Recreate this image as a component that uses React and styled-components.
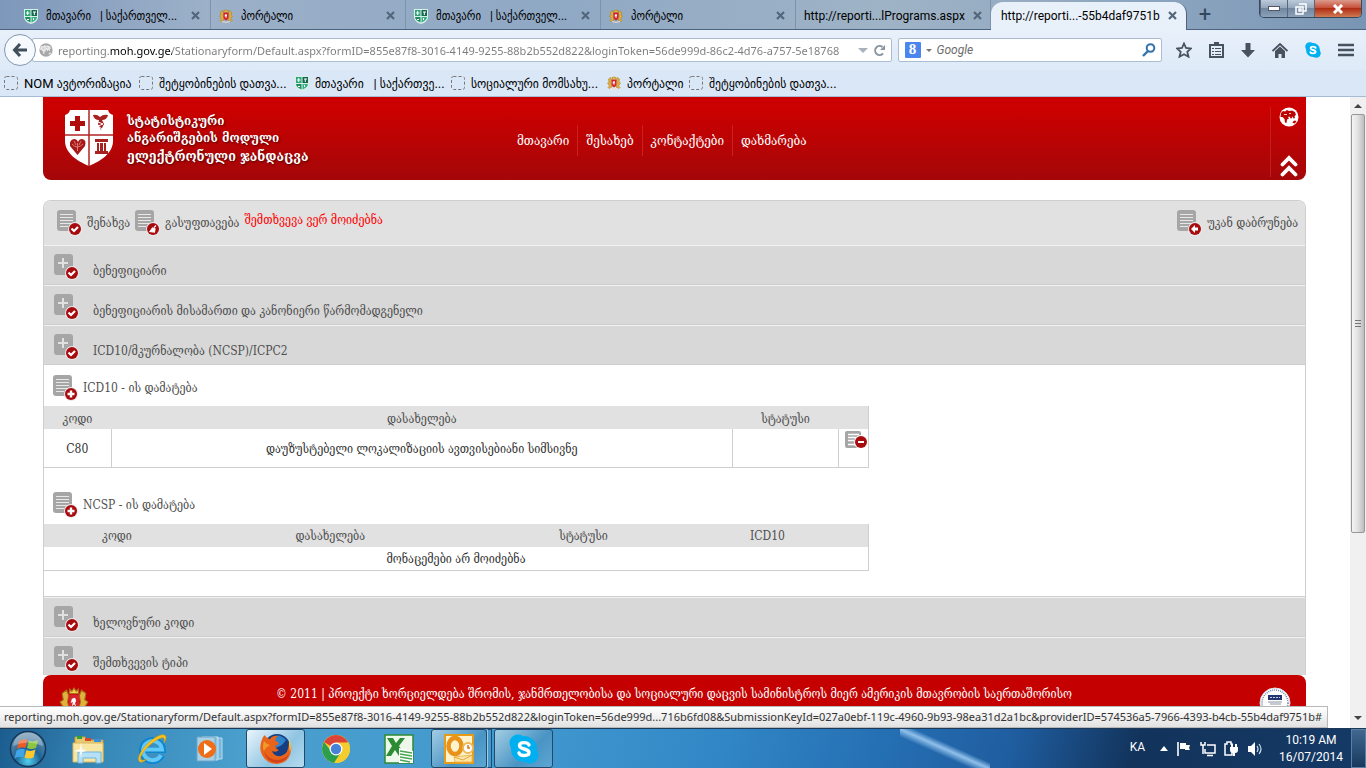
import React from 'react'
import styled, { createGlobalStyle } from 'styled-components'

const uiFont = 'Roboto, "DejaVu Sans Condensed", "DejaVu Sans", sans-serif'
const urlFont = '"Noto Sans", "Open Sans", sans-serif'
const pageFont = '"DejaVu Serif Condensed", "DejaVu Serif", serif'

const URL_TEXT = 'reporting.moh.gov.ge/Stationaryform/Default.aspx?formID=855e87f8-3016-4149-9255-88b2b552d822&loginToken=56de999d-86c2-4d76-a757-5e18768'
const STATUS_TEXT = 'reporting.moh.gov.ge/Stationaryform/Default.aspx?formID=855e87f8-3016-4149-9255-88b2b552d822&loginToken=56de999d...716b6fd08&SubmissionKeyId=027a0ebf-119c-4960-9b93-98ea31d2a1bc&providerID=574536a5-7966-4393-b4cb-55b4daf9751b#'

const tabs = [
  { icon: 'shield', title: 'მთავარი   | საქართველ...' },
  { icon: 'crest', title: 'პორტალი' },
  { icon: 'shield', title: 'მთავარი   | საქართველ...' },
  { icon: 'crest', title: 'პორტალი' },
  { title: 'http://reporti...lPrograms.aspx' },
  { title: 'http://reporti...-55b4daf9751b', active: true },
]

const bookmarks = [
  { icon: 'blank', title: 'NOM ავტორიზაცია', width: 135 },
  { icon: 'blank', title: 'შეტყობინების დათვა...', width: 156 },
  { icon: 'shield', title: 'მთავარი   | საქართვე...', width: 156 },
  { icon: 'blank', title: 'სოციალური მომსახუ...', width: 156 },
  { icon: 'crest', title: 'პორტალი', width: 82 },
  { icon: 'blank', title: 'შეტყობინების დათვა...', width: 160 },
]

/* ---------- icons ---------- */

const GreenShield = () => (
  <svg width="14" height="16" viewBox="0 0 14 16">
    <path d="M0 1h14v8c0 3-3 6-7 7-4-1-7-4-7-7z" fill="#d9f0e6" />
    <path d="M1 2h5.500v6H1z" fill="#2fa67a" />
    <path d="M7.500 2H13v6H7.500z" fill="#15664e" />
    <path d="M1 9h5.500v5.500C3 13 1 11 1 9z" fill="#1f8c64" />
    <path d="M7.500 9H13c0 2-2 4-5.500 5.500z" fill="#37b083" />
    <path d="M3.700 3v4M2 5h3.500M9 4h3M10.300 4v3M3 11l1 1 1-1M9.500 10v2" stroke="#fff" strokeWidth="1" />
  </svg>
)

const Crest = ({ size = 14 }) => (
  <svg width={size} height={size} viewBox="0 0 28 28">
    <path d="M3 6l4-3 2 5-1 6 2 8-6 3-2-2 3-3-4-6 3-2zM25 6l-4-3-2 5 1 6-2 8 6 3 2-2-3-3 4-6-3-2z" fill="#e0b13c" stroke="#a87416" strokeWidth="1" />
    <path d="M9 7h10v9c0 4-3 6-5 7-2-1-5-3-5-7z" fill="#d5222b" />
    <path d="M10 6V2l2 2 2-3 2 3 2-2v4z" fill="#f3cf52" stroke="#a87416" strokeWidth="1" />
    <path d="M12 18l1-4-2 1 1-4 3-1 1 3-1 2 1 4-2-3z" fill="#fff" />
    <path d="M6 24q8 3 16 0v2q-8 3-16 0z" fill="#f0ded0" />
  </svg>
)

const BlankFavicon = () => (
  <svg width="14" height="14" viewBox="0 0 14 14">
    <rect x="0.500" y="0.500" width="13" height="13" rx="2" fill="none" stroke="#777" strokeDasharray="3 2" />
  </svg>
)

const Favicon = ({ kind }) => {
  if (kind === 'shield') return <GreenShield />
  if (kind === 'crest') return <Crest />
  return <BlankFavicon />
}

const Close = () => (
  <svg width="9" height="9" viewBox="0 0 9 9">
    <path d="M1 1l7 7M8 1l-7 7" stroke="#53667c" strokeWidth="2.200" />
  </svg>
)

const MinistryShield = () => (
  <svg width="50" height="56" viewBox="0 0 50 56">
    <path d="M6 0h38q1 4 5 5v26c0 12-12 20-24 25C13 51 1 43 1 31V5q4-1 5-5z" fill="#fff" />
    <path d="M25 0v56M1 25h48" stroke="#b32525" strokeWidth="1.500" />
    <path d="M11 6h5v5h5v5h-5v5h-5v-5H6v-5h5z" fill="#b00d0d" />
    <path d="M29 5q4-1 7 2 3-3 8-2-1 5-6 5l2 4-3 6-3-6 1-4q-5 0-6-5z" fill="#a82020" />
    <path d="M34 12l5 2-5 2 4 3" stroke="#fff" fill="none" />
    <path d="M13.500 45L6 36q-1-6 4-7 3 0 4 3 1-3 4-3 5 1 3 7z" fill="#a81818" />
    <path d="M8 34q5 6 11 0M13.500 33v8M10 31l2 4M17 31l-2 4" stroke="#d77" fill="none" />
    <path d="M31 29h13v3H31zM33 33h9v8h-9zM31 41h13v3H31z" fill="#a82020" />
    <path d="M35.500 33v8M39.500 33v8" stroke="#fff" />
  </svg>
)

const badgeMarks = {
  check: <path d="M14.500 18.500l2.500 2.500 4-4" fill="none" stroke="#fff" strokeWidth="2.200" />,
  plus: <path d="M18 15.500v7M14.500 19h7" stroke="#fff" strokeWidth="2.400" />,
  back: <path d="M14 19l4-4v2.500h3v3h-3V23z" fill="#fff" />,
  brush: <path d="M21 15.500l-2 2M15 21.500l2.500-3.500 2.500 1-.500 3z" fill="#fff" stroke="#fff" strokeWidth="1.200" />,
}

/* grey sheet or grey plus tile with a round red badge */
const FormIcon = ({ tile, mark }) => (
  <svg width="25" height="26" viewBox="0 0 25 26">
    <rect x="0" y="0" width="19" height="21" rx="3" fill="#a6a6a6" />
    {tile
      ? <path d="M9 4v10M4 9h10" stroke="#e1e1e1" strokeWidth="2" />
      : <path d="M3 4.500h13M3 7.500h13M3 10.500h13M3 13.500h11M3 16.500h8" stroke="#e8e8e8" strokeWidth="1.200" />}
    <circle cx="18" cy="19" r="7" fill="#e9e9e9" />
    <circle cx="18" cy="19" r="6" fill="#a80b0e" />
    {badgeMarks[mark]}
  </svg>
)

const RemoveIcon = () => (
  <svg width="23" height="18" viewBox="0 0 23 18">
    <rect x="0" y="0" width="16" height="17" rx="2" fill="#a6a6a6" />
    <path d="M3 3.500h11M3 6.500h8M3 9.500h6M3 13.500h7" stroke="#fff" strokeWidth="1.500" />
    <circle cx="16" cy="11" r="7" fill="#fff" />
    <circle cx="16" cy="11" r="6" fill="#a80b0e" />
    <path d="M13 11h6" stroke="#fff" strokeWidth="2" />
  </svg>
)

const Globe = ({ fill = '#fff', land = '#bd0404', size = 20 }) => (
  <svg width={size} height={size} viewBox="0 0 20 20">
    <circle cx="10" cy="10" r="9.500" fill={fill} />
    <path d="M2 6l2-2 2 .500L8 3l2 1 3-.500 3 1.500 1 3-1.500 1 .500 2-1.500.500L13.500 9.500 12 12l-1.500-2.500L9 10l1 1.500-2 1L7.500 16 6 15.500 5.500 12 3.500 10 1.500 10z" fill={land} />
    <path d="M5 7.500h3M10 6.500h2" stroke={fill} strokeWidth="0.800" />
    <path d="M13.500 15l2-1.500 2 .500-1.500 2.500-2-.500z" fill={land} />
  </svg>
)

const DoubleUp = () => (
  <svg width="18" height="22" viewBox="0 0 18 22">
    <path d="M2.500 9.500L9 3l6.500 6.500M2.500 19.500L9 13l6.500 6.500" fill="none" stroke="#fff" strokeWidth="3.800" strokeLinecap="round" />
  </svg>
)

const BackArrow = () => (
  <svg width="16" height="16" viewBox="0 0 16 16">
    <path d="M8 2L2.500 8 8 14M3 8h12" fill="none" stroke="#414f5d" strokeWidth="3" />
  </svg>
)

const Reload = () => (
  <svg width="13" height="13" viewBox="0 0 13 13">
    <path d="M10 9.500A4.500 4.500 0 1 1 9.500 3" fill="none" stroke="#8b95a0" strokeWidth="2" />
    <path d="M12 1v5H7z" fill="#8b95a0" />
  </svg>
)

const Magnifier = () => (
  <svg width="14" height="14" viewBox="0 0 14 14">
    <circle cx="8.500" cy="5" r="3.800" fill="none" stroke="#3373ad" strokeWidth="2" />
    <path d="M6 8l-5 5" stroke="#3373ad" strokeWidth="2.400" />
  </svg>
)

const Star = () => (
  <svg width="16" height="16" viewBox="0 0 16 16">
    <path d="M8 1.500l2 4.500 5 .500-3.700 3.300 1.200 4.900L8 12.200l-4.500 2.500 1.200-4.900L1 6.500 6 6z" fill="none" stroke="#46525f" strokeWidth="1.800" />
  </svg>
)

const Clipboard = () => (
  <svg width="15" height="16" viewBox="0 0 15 16">
    <path d="M1 3h13v12H1z" fill="none" stroke="#46525f" strokeWidth="2" />
    <path d="M5 0h5v4H5zM3 6h2v1H3zM6 6h6v1H6zM3 9h2v1H3zM6 9h6v1H6zM3 12h2v1H3zM6 12h6v1H6z" fill="#46525f" />
  </svg>
)

const Download = () => (
  <svg width="14" height="15" viewBox="0 0 14 15">
    <path d="M4.500 0h5v7H14l-7 7.500L0 7h4.500z" fill="#46525f" />
  </svg>
)

const Home = () => (
  <svg width="16" height="15" viewBox="0 0 16 15">
    <path d="M.500 8L8 1l7.500 7" fill="none" stroke="#46525f" strokeWidth="1.800" />
    <path d="M3 8l5-4.500L13 8v7H9.500v-4h-3v4H3z" fill="#46525f" />
  </svg>
)

const SkypeLogo = ({ size }) => (
  <svg width={size} height={size} viewBox="0 0 30 30">
    <circle cx="9" cy="9" r="8.500" fill="#00aff0" />
    <circle cx="21" cy="21" r="8.500" fill="#00aff0" />
    <circle cx="15" cy="15" r="13" fill="#00aff0" />
    <path d="M20 11c-1-3-9.500-3.500-9.500.500 0 4.500 9.500 2.500 9.500 7 0 4-9 3.800-10 .500" fill="none" stroke="#fff" strokeWidth="3.400" strokeLinecap="round" />
  </svg>
)

const MenuBars = () => (
  <svg width="16" height="14" viewBox="0 0 16 14">
    <path d="M0 2h16M0 7h16M0 12h16" stroke="#46525f" strokeWidth="2.600" />
  </svg>
)

const WindowsOrb = () => (
  <svg width="38" height="38" viewBox="0 0 38 38">
    <defs>
      <radialGradient id="orb" cx="50%" cy="85%" r="80%">
        <stop offset="0" stopColor="#4fd0ee" />
        <stop offset="0.450" stopColor="#1d6498" />
        <stop offset="1" stopColor="#6d93ad" />
      </radialGradient>
    </defs>
    <circle cx="19" cy="19" r="17.500" fill="url(#orb)" stroke="#16395a" strokeWidth="1.500" />
    <path d="M10 11q4-3 8.500-1l-2 8q-4-2-8.500 1z" fill="#ee5a24" />
    <path d="M20 10.500q4 2 9-.500l-2 8q-5 2-9 0z" fill="#8cc63f" />
    <path d="M7.500 20.500q4-3 8.500-1l-2 8q-4-2-8.500 1z" fill="#3fa5e8" />
    <path d="M17.500 20q4 2 9-.500l-2 8q-5 2-9 0z" fill="#fdc82f" />
    <path d="M4 16Q6 3 19 2.500 32 3 34 16 19 9 4 16z" fill="#fff" opacity="0.300" />
  </svg>
)

const FolderLogo = () => (
  <svg width="34" height="30" viewBox="0 0 34 30">
    <path d="M3 3h10l2 3h16v21H3z" fill="#e8c96e" stroke="#c39b3c" />
    <path d="M5 2h5v3H5z" fill="#2fa33a" />
    <path d="M13 4h6v3h-6z" fill="#d9472b" />
    <path d="M22 5h7v3h-7z" fill="#3d8edc" />
    <path d="M1 9h30v19H1z" fill="#f8e6a4" stroke="#d9b85c" />
    <path d="M6 29V18h23v11h-5v-5H11v5z" fill="#b6e0f6" stroke="#6fb4de" />
    <path d="M9 8l1 7 5 2-5 1-1 6-1-6-6-1 6-2z" fill="#fff" opacity="0.900" />
  </svg>
)

const ExplorerLogo = () => (
  <svg width="32" height="32" viewBox="0 0 32 32">
    <path d="M26 22A10.500 10.500 0 1 1 27 17H9" fill="none" stroke="#0d86d1" strokeWidth="6" />
    <path d="M25 22A9.500 9.500 0 1 1 26 16.500H9" fill="none" stroke="#62c8f8" strokeWidth="4" />
    <path d="M4 29C-2 25 12 6 25 2c6-1 6 3 3 8 1-5 0-6-3-5C14 9 2 23 5 27q2 1 6-1-4 4-7 3z" fill="#fbc51d" stroke="#d99a00" strokeWidth="0.600" />
  </svg>
)

const MediaLogo = () => (
  <svg width="28" height="26" viewBox="0 0 28 26">
    <path d="M10 2h16v21H10z" fill="#78b6dc" stroke="#b5dcf0" />
    <path d="M6 1h16v23H6z" fill="#8fc4e3" stroke="#c2e2f3" />
    <path d="M1 1h18v24H1z" fill="#a9cfe3" stroke="#6aa6cb" />
    <circle cx="11" cy="13" r="9" fill="#ee6d16" />
    <path d="M8 7l8 6-8 6z" fill="#fff" />
  </svg>
)

const FirefoxLogo = () => (
  <svg width="32" height="32" viewBox="0 0 32 32">
    <circle cx="17" cy="14" r="13" fill="#173e82" />
    <path d="M11 5q8-6 15 2-5 8-13 8z" fill="#2f83cb" />
    <path d="M3 4q-5 10-1 18 5 9 15 9 12-1 14-13 1-6-2-9 0 12-8 14-7 1-9-5 4 2 7-1-3-1-4-4l4-2q-1-3-4-3 0-3 3-5-5-1-8 3-4-1-5-4z" fill="#e8641b" />
    <path d="M4 18q2 11 13 12 9-1 12-9-4 5-11 6Q8 27 4 18z" fill="#d2421a" />
    <path d="M29 6q3 6 1 13-1-5-1-13z" fill="#fcd549" />
    <path d="M4 8q-2 6 0 10 2-4 6-6-4-1-6-4z" fill="#f39a26" />
  </svg>
)

const ChromeLogo = () => (
  <svg width="30" height="30" viewBox="0 0 30 30">
    <circle cx="15" cy="15" r="14" fill="#f5cc2d" />
    <path d="M15 15L2.900 8A14 14 0 0 1 27.100 8z" fill="#dc4437" />
    <path d="M3 8a14 14 0 0 0 10 20.900L20 18l-10-1z" fill="#2c9f4e" />
    <path d="M15 8.500h12.400A14 14 0 0 1 15 29l6-11z" fill="#f5cc2d" />
    <circle cx="15" cy="15" r="6.500" fill="#fff" />
    <circle cx="15" cy="15" r="5.200" fill="#4583d8" />
  </svg>
)

const ExcelLogo = () => (
  <svg width="32" height="30" viewBox="0 0 32 30">
    <path d="M2 1h28v28H2z" fill="#eef8ea" stroke="#2d8a35" strokeWidth="1.500" />
    <path d="M4 4h6l3 5 4-5h5l-6 8 7 10h-7l-4-6-4 6H3l6-10z" fill="#2b8c33" />
    <path d="M16 14l14 3v12H16z" fill="#fff" />
    <path d="M17 17l12 2M17 20l12 2M17 23l12 2M17 26l10 2" stroke="#4aa651" strokeWidth="1.400" />
  </svg>
)

const OutlookLogo = () => (
  <svg width="32" height="30" viewBox="0 0 32 30">
    <path d="M2 1h28v28H2z" fill="#fff3cd" stroke="#e69a15" strokeWidth="2" />
    <ellipse cx="12" cy="12" rx="6.500" ry="8" fill="none" stroke="#e8921a" strokeWidth="4.500" />
    <circle cx="25" cy="14" r="5" fill="#fff" stroke="#eeb755" strokeWidth="2" />
    <path d="M25 11v3h2" fill="none" stroke="#d17711" strokeWidth="1.500" />
    <path d="M11 23l18-2v7H12z" fill="#fde6a6" stroke="#eeb755" />
    <path d="M11 23l9 3 9-5" fill="none" stroke="#e8a53a" />
  </svg>
)

const FlagIcon = () => (
  <svg width="16" height="16" viewBox="0 0 16 16">
    <path d="M2 1v14" stroke="#fff" strokeWidth="1.600" />
    <path d="M4 2h6v2h4l-1 3 1 2H9V8H4z" fill="#fff" />
  </svg>
)

const NetworkIcon = () => (
  <svg width="16" height="16" viewBox="0 0 16 16">
    <path d="M7 4h8v8H5V8M7 14.500h6" fill="none" stroke="#fff" strokeWidth="1.500" />
    <path d="M1 1v3h4V1M3 4v9" fill="none" stroke="#fff" strokeWidth="1.500" />
  </svg>
)

const PowerIcon = () => (
  <svg width="15" height="16" viewBox="0 0 15 16">
    <path d="M1 3h2V1h4v2h1v11H1z" fill="none" stroke="#fff" strokeWidth="1.500" />
    <path d="M6 6h8v3q0 3-3 3v3H9v-3q-3 0-3-3zM7 3h2v3H7zM11 3h2v3h-2z" fill="#fff" />
  </svg>
)

const SoundIcon = () => (
  <svg width="16" height="16" viewBox="0 0 16 16">
    <path d="M1 5h3l4-4v14l-4-4H1z" fill="#fff" />
    <path d="M10 5q2 3 0 6M12 3q4 5 0 10" fill="none" stroke="#cfe0ee" strokeWidth="1.200" />
  </svg>
)

const UsaidSeal = () => (
  <svg width="32" height="32" viewBox="0 0 32 32">
    <circle cx="16" cy="16" r="15" fill="#fff" stroke="#d7dde6" />
    <circle cx="16" cy="16" r="13" fill="none" stroke="#7285ab" strokeWidth="1.500" strokeDasharray="1 1" />
    <path d="M9 8h14v5H9z" fill="#24356f" />
    <path d="M11 10.500h10" stroke="#c5cbe0" strokeDasharray="2 1" />
    <path d="M9 15h14M11 17h11" stroke="#8c929f" />
  </svg>
)

/* ---------- styles ---------- */

const GlobalStyle = createGlobalStyle`
  * { box-sizing: border-box; }
  body { margin: 0; }
  button, input { font: inherit; color: inherit; }
  button { background: none; border: 0; padding: 0; cursor: pointer; }
  a { color: inherit; text-decoration: none; }
  svg { display: block; flex: none; }
`

const Screen = styled.div`
  display: flex;
  flex-direction: column;
  height: 100vh;
  overflow: hidden;
  font-family: ${uiFont};
  font-size: 12px;
  background: #fff;
`

const TabStrip = styled.div`
  display: flex;
  align-items: stretch;
  height: 30px;
  padding-left: 16px;
  background: linear-gradient(to right, #7e98bb, #9cb0c8 15%, #8fa8c4 40%, #9fb3c6 65%, #86a0bc 90%, #7895b3);
  border-bottom: 1px solid #4c6380;
`

const Tab = styled.div`
  display: flex;
  align-items: center;
  gap: 8px;
  flex: 0 1 ${p => (p.$active ? '196px' : '195px')};
  min-width: 0;
  height: ${p => (p.$active ? '29px' : 'auto')};
  margin-top: ${p => (p.$active ? '2px' : '0')};
  padding: ${p => (p.$active ? '0 14px 2px 10px' : '2px 10px 0 8px')};
  border-right: 1px solid ${p => (p.$active ? '#4c6380' : '#7d92ac')};
  border-radius: ${p => (p.$active ? '12px 12px 0 0' : '0')};
  background: ${p => (p.$active ? '#e8f0fa' : 'transparent')};
  white-space: pre;
`

const TabTitle = styled.span`
  flex: 1;
`

const NewTab = styled.button`
  width: 36px;
  font-size: 22px;
  line-height: 30px;
  color: #33475c;
`

const WindowButtons = styled.div`
  display: flex;
  height: 18px;
  margin-left: auto;
  margin-right: 4px;
  border: 1px solid #39485a;
  border-top: 0;
  border-radius: 0 0 5px 5px;
  overflow: hidden;
`

const WindowButton = styled.button`
  display: flex;
  align-items: center;
  justify-content: center;
  width: ${p => (p.$close ? '47px' : '27px')};
  border-left: 1px solid #57687c;
  background: ${p => (p.$close
    ? 'linear-gradient(#dc9a8c, #c8513b 45%, #b02d14 50%, #cf7a52)'
    : 'linear-gradient(#bccada, #96a8bd 45%, #71869f 50%, #8ba2bb)')};
`

const NavBar = styled.div`
  display: flex;
  align-items: center;
  height: 40px;
  padding: 0 12px 0 4px;
  background: linear-gradient(#e8f0fa, #deeaf8);
`

const BackButton = styled.button`
  display: flex;
  align-items: center;
  justify-content: center;
  width: 32px;
  height: 32px;
  border: 1px solid #8397ad;
  border-radius: 50%;
  background: #f6f9fd;
  z-index: 1;
`

const Field = styled.div`
  display: flex;
  align-items: center;
  flex: ${p => p.$grow} 1 0;
  min-width: 0;
  height: 24px;
  margin-left: ${p => p.$gap};
  padding: 0 5px 0 6px;
  gap: 5px;
  border: 1px solid #a9bdd3;
  border-radius: 2px;
  background: #fff;
`

const UrlInput = styled.input`
  flex: 1;
  min-width: 0;
  height: 22px;
  padding: 0;
  border: 0;
  outline: 0;
  font-family: ${urlFont};
  font-size: 11px;
  background: linear-gradient(to right, #7a7a7a 52px, #000 52px, #000 114px, #7a7a7a 114px);
  background-clip: text;
  -webkit-text-fill-color: transparent;
`

const SearchInput = styled.input`
  flex: 1;
  min-width: 0;
  height: 22px;
  padding: 0;
  border: 0;
  outline: 0;
  font-style: italic;
  background: transparent;
  &::placeholder { color: #6d6d6d; opacity: 1; }
`

const GoogleMark = styled.span`
  width: 16px;
  height: 16px;
  border-radius: 1px;
  background: #4a86ee;
  color: #fff;
  font: bold 15px/15px "Liberation Serif", serif;
  text-align: center;
`

const Caret = styled.span`
  border: ${p => p.$size} solid transparent;
  border-top-color: ${p => p.$color};
  border-bottom: 0;
`

const NavIcons = styled.div`
  display: flex;
  align-items: center;
  gap: 17px;
  padding-left: 14px;
`

const Bookmarks = styled.div`
  display: flex;
  align-items: center;
  height: 27px;
  padding-left: 4px;
  background: #d9e7f7;
  border-bottom: 1px solid #a6bcd4;
  font-size: 13px;
`

const Bookmark = styled.a`
  display: flex;
  align-items: center;
  gap: 6px;
  flex: 0 0 ${p => p.$width}px;
  white-space: pre;
`

const Viewport = styled.div`
  position: relative;
  display: flex;
  flex: 1;
  min-height: 0;
`

const Page = styled.main`
  display: flex;
  flex-direction: column;
  flex: 1;
  min-width: 0;
  padding: 0 44px 0 43px;
  font-family: ${pageFont};
  font-size: 12px;
  color: #4f4f4f;
`

const Header = styled.header`
  display: flex;
  flex: none;
  height: 83px;
  padding-left: 21px;
  border-radius: 0 0 8px 8px;
  background: linear-gradient(#cb0000 15%, #a40709);
  color: #fff;
`

const Brand = styled.a`
  display: flex;
  gap: 13px;
  width: 453px;
  padding-top: 13px;
`

const BrandText = styled.div`
  padding-top: 2px;
  font-size: 13px;
  font-weight: bold;
  line-height: 17px;
  text-shadow: 1px 1px 2px #500;
  white-space: nowrap;
`

const BrandName = styled.div`
  font-size: 14px;
  line-height: 20px;
`

const Menu = styled.nav`
  display: flex;
  align-items: center;
  flex: 1;
  padding-top: 3px;
  font-size: 13px;
`

const MenuLink = styled.a`
  padding: 8px ${p => (p.$first ? '8px 8px 0' : '8px')};
  border-left: ${p => (p.$first ? '0' : '1px solid #cf2020')};
  white-space: nowrap;
`

const HeaderTools = styled.div`
  display: flex;
  flex-direction: column;
  align-items: center;
  justify-content: space-between;
  width: 36px;
  margin: 10px 0 3px;
  border-left: 1px solid #c02020;
`

const Panel = styled.section`
  flex: 1;
  min-height: 0;
  margin-top: 20px;
  border: 1px solid #cecece;
  border-bottom: 0;
  border-radius: 8px 8px 0 0;
  overflow: hidden;
`

const Toolbar = styled.div`
  display: flex;
  align-items: center;
  height: 44px;
  padding: 0 7px 0 13px;
  gap: 5px;
  background: #e1e1e1;
`

const ToolButton = styled.button`
  display: flex;
  align-items: center;
  gap: 5px;
  margin-left: ${p => (p.$end ? 'auto' : '0')};
  white-space: nowrap;
`

const Message = styled.span`
  padding-bottom: 6px;
  color: #f00;
`

const AccordionRow = styled.button`
  display: flex;
  align-items: center;
  gap: 14px;
  width: 100%;
  height: 40px;
  padding: 4px 10px 0;
  border-top: 1px solid #f2f2f2;
  border-bottom: 1px solid #cecece;
  background: #d8d8d8;
  text-align: left;
`

const RowText = styled.span`
  padding-top: 8px;
`

const Details = styled.div`
  padding-bottom: 25px;
  border-bottom: 1px solid #cecece;
`

const AddButton = styled.button`
  display: flex;
  align-items: center;
  gap: 5px;
  height: 41px;
  padding: 4px 9px 0;
`

const DataTable = styled.table`
  width: 825px;
  max-width: 100%;
  margin-bottom: ${p => p.$gap || '0'};
  border-collapse: collapse;
  table-layout: fixed;
  border-right: 1px solid #cecece;
  border-bottom: 1px solid #cecece;
  text-align: center;
  th {
    height: 23px;
    padding: 2px 0 0;
    background: #e1e1e1;
    font-weight: normal;
  }
  td {
    height: ${p => p.$row};
    padding: 2px 0 0;
    color: #333;
  }
  td + td { border-left: 1px solid #cecece; }
`

const ActionCell = styled.td`
  vertical-align: top;
  button { display: block; margin-left: 6px; }
`

const Footer = styled.footer`
  display: flex;
  justify-content: space-between;
  flex: none;
  height: 53px;
  padding: 12px 15px 0 16px;
  border-radius: 8px 8px 0 0;
  background: #c40000;
  color: #fff;
`

const ScrollBar = styled.div`
  display: flex;
  flex-direction: column;
  align-items: center;
  width: 16px;
  padding: 7px 0 8px;
  gap: 6px;
  background: #f0f0f0;
`

const ScrollUp = styled.span`
  border: 4px solid transparent;
  border-bottom-color: #444;
  border-top: 0;
`

const ScrollThumb = styled.div`
  display: flex;
  align-items: center;
  justify-content: center;
  width: 14px;
  height: 68%;
  margin-bottom: auto;
  border: 1px solid #979797;
  border-radius: 2px;
  background: linear-gradient(to right, #f5f5f5, #e0e0e0 50%, #bdbdbd);
`

const StatusBar = styled.div`
  position: absolute;
  left: 0;
  bottom: 0;
  height: 22px;
  padding: 0 5px 0 4px;
  border: 1px solid #b8b8b8;
  border-left: 0;
  background: linear-gradient(#fff, #e2e2e2);
  color: #333;
  font-family: ${urlFont};
  font-size: 11px;
  line-height: 20px;
  white-space: nowrap;
`

const TaskBar = styled.div`
  display: flex;
  flex: none;
  height: 40px;
  padding-left: 8px;
  border-top: 1px solid #1c3a58;
  background:
    linear-gradient(to top right, transparent 40%, #8fc0ea 50%, transparent 58%) 900px 0 / 90px 40px no-repeat,
    linear-gradient(105deg, #1b5c8e, #3789b8 8%, #4a9fcd 18%, #4299cf 38%, #3288c6 52%, #2570b4 64%, #1f5d9f 74%, #12335b 83%, #153a66);
  color: #fff;
`

const TaskItem = styled.button`
  display: flex;
  align-items: center;
  justify-content: center;
  width: ${p => p.$width || '62px'};
  border: 1px solid ${p => (p.$open ? '#1f4a6c' : 'transparent')};
  border-radius: 3px;
  background: ${p => {
    if (p.$current) return 'linear-gradient(135deg, #eaf5fb, #8fc4e2 60%, #b6dcef)'
    return p.$open ? 'linear-gradient(135deg, #a3cde3, #4a94c4 60%, #5ba6d2)' : 'none'
  }};
`

const Stack = styled.span`
  width: 5px;
  border: 1px solid #1f4a6c;
  border-left-color: #9fcbe4;
  margin-right: 2px;
`

const Tray = styled.div`
  display: flex;
  align-items: center;
  gap: 8px;
  margin-left: auto;
`

const Language = styled.span`
  margin-right: 7px;
  padding-bottom: 4px;
`

const Clock = styled.time`
  width: 80px;
  line-height: 17px;
  text-align: center;
`

const ShowDesktop = styled.button`
  width: 15px;
  border: 1px solid #5a7fa4;
  background: linear-gradient(#41688f, #17395f);
`

/* ---------- parts ---------- */

const Browser = () => (
  <>
    <TabStrip>
      {tabs.map((tab, i) => (
        <Tab key={i} $active={tab.active}>
          {tab.icon && <Favicon kind={tab.icon} />}
          <TabTitle>{tab.title}</TabTitle>
          <button aria-label="Close tab"><Close /></button>
        </Tab>
      ))}
      <NewTab aria-label="New tab">+</NewTab>
      <WindowButtons>
        <WindowButton aria-label="Minimize">
          <svg width="12" height="5"><rect x="0.500" y="0.500" width="11" height="4" fill="#fff" stroke="#556" /></svg>
        </WindowButton>
        <WindowButton aria-label="Restore">
          <svg width="12" height="12" viewBox="0 0 12 12"><path d="M4 1h7v7H8M1 4h7v7H1zM4 6h2v2H4z" fill="none" stroke="#fff" strokeWidth="1.500" /></svg>
        </WindowButton>
        <WindowButton $close aria-label="Close">
          <svg width="12" height="10" viewBox="0 0 12 10"><path d="M2 1l8 8M10 1L2 9" stroke="#fff" strokeWidth="3" /></svg>
        </WindowButton>
      </WindowButtons>
    </TabStrip>
    <NavBar>
      <BackButton aria-label="Back"><BackArrow /></BackButton>
      <Field $grow={845} $gap="-4px">
        <Globe size={14} fill="#a8a8a8" land="#e6e6e6" />
        <UrlInput aria-label="Address" defaultValue={URL_TEXT} />
        <Caret $size="5px" $color="#a8b2bd" />
        <button aria-label="Reload"><Reload /></button>
      </Field>
      <Field $grow={251} $gap="6px">
        <GoogleMark>8</GoogleMark>
        <Caret $size="3px" $color="#777" />
        <SearchInput aria-label="Search" placeholder="Google" />
        <button aria-label="Go"><Magnifier /></button>
      </Field>
      <NavIcons>
        <button aria-label="Bookmark this page"><Star /></button>
        <button aria-label="Bookmarks"><Clipboard /></button>
        <button aria-label="Downloads"><Download /></button>
        <button aria-label="Home"><Home /></button>
        <button aria-label="Skype"><SkypeLogo size={16} /></button>
        <button aria-label="Menu"><MenuBars /></button>
      </NavIcons>
    </NavBar>
    <Bookmarks>
      {bookmarks.map((b, i) => (
        <Bookmark key={i} href="#" $width={b.width}>
          <Favicon kind={b.icon} />
          {b.title}
        </Bookmark>
      ))}
    </Bookmarks>
  </>
)

const Section = ({ children }) => (
  <AccordionRow>
    <FormIcon tile mark="check" />
    <RowText>{children}</RowText>
  </AccordionRow>
)

const App = () => {
  return (
    <Screen>
      <GlobalStyle />
      <Browser />
      <Viewport>
        <Page>
          <Header>
            <Brand href="#">
              <MinistryShield />
              <BrandText>
                <div>სტატისტიკური</div>
                <div>ანგარიშგების მოდული</div>
                <BrandName>ელექტრონული ჯანდაცვა</BrandName>
              </BrandText>
            </Brand>
            <Menu>
              <MenuLink href="#" $first>მთავარი</MenuLink>
              <MenuLink href="#">შესახებ</MenuLink>
              <MenuLink href="#">კონტაქტები</MenuLink>
              <MenuLink href="#">დახმარება</MenuLink>
            </Menu>
            <HeaderTools>
              <button aria-label="Language"><Globe /></button>
              <button aria-label="Collapse"><DoubleUp /></button>
            </HeaderTools>
          </Header>

          <Panel>
            <Toolbar>
              <ToolButton><FormIcon mark="check" />შენახვა</ToolButton>
              <ToolButton><FormIcon mark="brush" />გასუფთავება</ToolButton>
              <Message>შემთხვევა ვერ მოიძებნა</Message>
              <ToolButton $end><FormIcon mark="back" />უკან დაბრუნება</ToolButton>
            </Toolbar>
            <Section>ბენეფიციარი</Section>
            <Section>ბენეფიციარის მისამართი და კანონიერი წარმომადგენელი</Section>
            <Section>ICD10/მკურნალობა (NCSP)/ICPC2</Section>
            <Details>
              <AddButton><FormIcon mark="plus" />ICD10 - ის დამატება</AddButton>
              <DataTable $row="38px" $gap="15px">
                <colgroup>
                  <col width="67" />
                  <col />
                  <col width="106" />
                  <col width="30" />
                </colgroup>
                <thead>
                  <tr>
                    <th>კოდი</th>
                    <th>დასახელება</th>
                    <th>სტატუსი</th>
                    <th />
                  </tr>
                </thead>
                <tbody>
                  <tr>
                    <td>C80</td>
                    <td>დაუზუსტებელი ლოკალიზაციის ავთვისებიანი სიმსივნე</td>
                    <td />
                    <ActionCell>
                      <button aria-label="Remove"><RemoveIcon /></button>
                    </ActionCell>
                  </tr>
                </tbody>
              </DataTable>
              <AddButton><FormIcon mark="plus" />NCSP - ის დამატება</AddButton>
              <DataTable $row="24px">
                <colgroup>
                  <col width="146" />
                  <col />
                  <col width="226" />
                  <col width="142" />
                  <col width="30" />
                </colgroup>
                <thead>
                  <tr>
                    <th>კოდი</th>
                    <th>დასახელება</th>
                    <th>სტატუსი</th>
                    <th>ICD10</th>
                    <th />
                  </tr>
                </thead>
                <tbody>
                  <tr>
                    <td colSpan={5}>მონაცემები არ მოიძებნა</td>
                  </tr>
                </tbody>
              </DataTable>
            </Details>
            <Section>ხელოვნური კოდი</Section>
            <Section>შემთხვევის ტიპი</Section>
          </Panel>

          <Footer>
            <Crest size={30} />
            <span>© 2011 | პროექტი ხორციელდება შრომის, ჯანმრთელობისა და სოციალური დაცვის სამინისტროს მიერ ამერიკის მთავრობის საერთაშორისო</span>
            <UsaidSeal />
          </Footer>
        </Page>
        <ScrollBar>
          <ScrollUp />
          <ScrollThumb>
            <svg width="6" height="7"><path d="M0 .500h6M0 3.500h6M0 6.500h6" stroke="#777" /></svg>
          </ScrollThumb>
          <Caret $size="4px" $color="#444" />
        </ScrollBar>
        <StatusBar>{STATUS_TEXT}</StatusBar>
      </Viewport>
      <TaskBar>
        <TaskItem $width="40px" aria-label="Start"><WindowsOrb /></TaskItem>
        <TaskItem $width="82px" aria-label="Explorer"><FolderLogo /></TaskItem>
        <TaskItem $width="44px" aria-label="Internet Explorer"><ExplorerLogo /></TaskItem>
        <TaskItem $width="72px" aria-label="Media Player"><MediaLogo /></TaskItem>
        <TaskItem $width="59px" $open $current aria-label="Firefox"><FirefoxLogo /></TaskItem>
        <TaskItem aria-label="Chrome"><ChromeLogo /></TaskItem>
        <TaskItem $width="64px" aria-label="Excel"><ExcelLogo /></TaskItem>
        <TaskItem $width="56px" $open aria-label="Outlook"><OutlookLogo /></TaskItem>
        <Stack />
        <TaskItem $width="59px" $open aria-label="Skype"><SkypeLogo size={30} /></TaskItem>
        <Tray>
          <Language>KA</Language>
          <svg width="8" height="5" viewBox="0 0 8 5"><path d="M0 5l4-5 4 5z" fill="#fff" /></svg>
          <FlagIcon />
          <NetworkIcon />
          <PowerIcon />
          <SoundIcon />
          <Clock>10:19 AM<br />16/07/2014</Clock>
        </Tray>
        <ShowDesktop aria-label="Show desktop" />
      </TaskBar>
    </Screen>
  )
}

export default App
